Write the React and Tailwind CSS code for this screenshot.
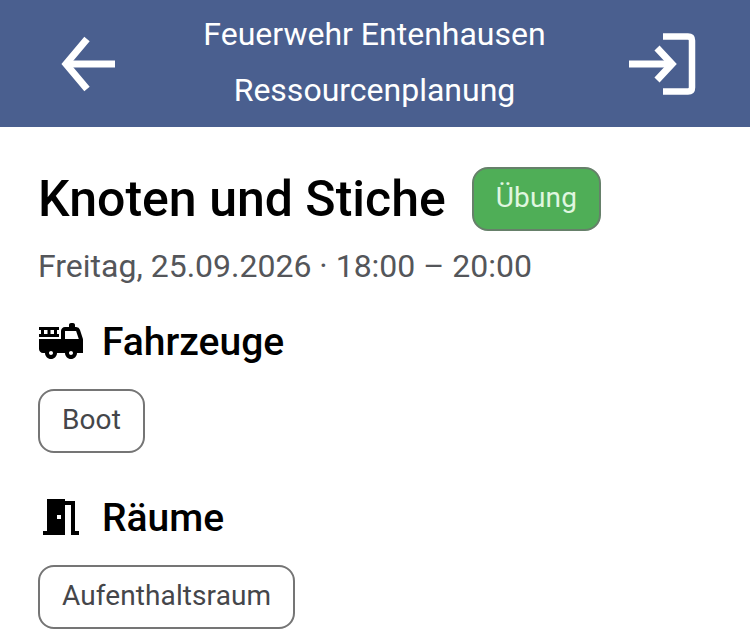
import { MdFireTruck, MdMeetingRoom } from 'react-icons/md'

function BackIcon() {
  return (
    <svg width="56" height="56" viewBox="0 0 56 56" fill="none" stroke="white" strokeWidth="7" strokeLinejoin="miter">
      <path d="M27 3 L6 28 L27 53" />
      <path d="M8 28 H55" />
    </svg>
  )
}

function LoginIcon() {
  return (
    <svg width="68" height="62" viewBox="0 0 68 62" fill="none" stroke="white">
      <path d="M35 3.500 H60 Q64 3.500 64 7.500 V54.500 Q64 58.500 60 58.500 H35" strokeWidth="6.500" />
      <path d="M1 31 H42" strokeWidth="7" />
      <path d="M29 15 L44 31 L29 47" strokeWidth="7" />
    </svg>
  )
}

function Tag({ children }) {
  return (
    <span className="inline-flex h-[64px] items-center rounded-[16px] border-2 border-[#757575] px-[22px] pb-[2px] text-[28px] tracking-[0.1px] text-[#45464a]">
      {children}
    </span>
  )
}

function Section({ icon, title, tag }) {
  return (
    <section>
      <div className="flex h-[56px] items-center gap-[17px]">
        <span className="-ml-[1px] -mt-[2px]">{icon}</span>
        <h2 className="text-[39px] font-medium leading-none text-black">{title}</h2>
      </div>
      <div className="mt-[19px]">
        <Tag>{tag}</Tag>
      </div>
    </section>
  )
}

export default function App() {
  return (
    <div className="h-[638px] w-[750px] overflow-hidden bg-white font-['Roboto',sans-serif]">
      <header className="flex h-[127px] items-center justify-between bg-[#4a5f8f] pl-[60px] pr-[54px] text-white">
        <BackIcon />
        <div className="ml-[5px] pb-[3px] text-center text-[32px] leading-[56px]">
          <div>Feuerwehr Entenhausen</div>
          <div>Ressourcenplanung</div>
        </div>
        <LoginIcon />
      </header>
      <main className="px-[38px] pt-[40px]">
        <div className="flex items-center gap-[26px]">
          <h1 className="text-[50px] font-medium leading-[64px] text-black">Knoten und Stiche</h1>
          <span className="inline-flex h-[64px] items-center rounded-[16px] border-2 border-[#66806a] bg-[#4fae57] px-[22px] pb-[2px] text-[28px] tracking-[0.2px] text-[#e0f7e0]">
            Übung
          </span>
        </div>
        <p className="mt-[13px] text-[32px] leading-[44px] text-[#54565a]">Freitag, 25.09.2026 · 18:00 – 20:00</p>
        <div className="mt-[26px] flex flex-col gap-[37px]">
          <Section icon={<MdFireTruck size={48} color="black" className="block" />} title="Fahrzeuge" tag="Boot" />
          <Section icon={<MdMeetingRoom size={48} color="black" className="block" />} title="Räume" tag="Aufenthaltsraum" />
        </div>
      </main>
    </div>
  )
}
